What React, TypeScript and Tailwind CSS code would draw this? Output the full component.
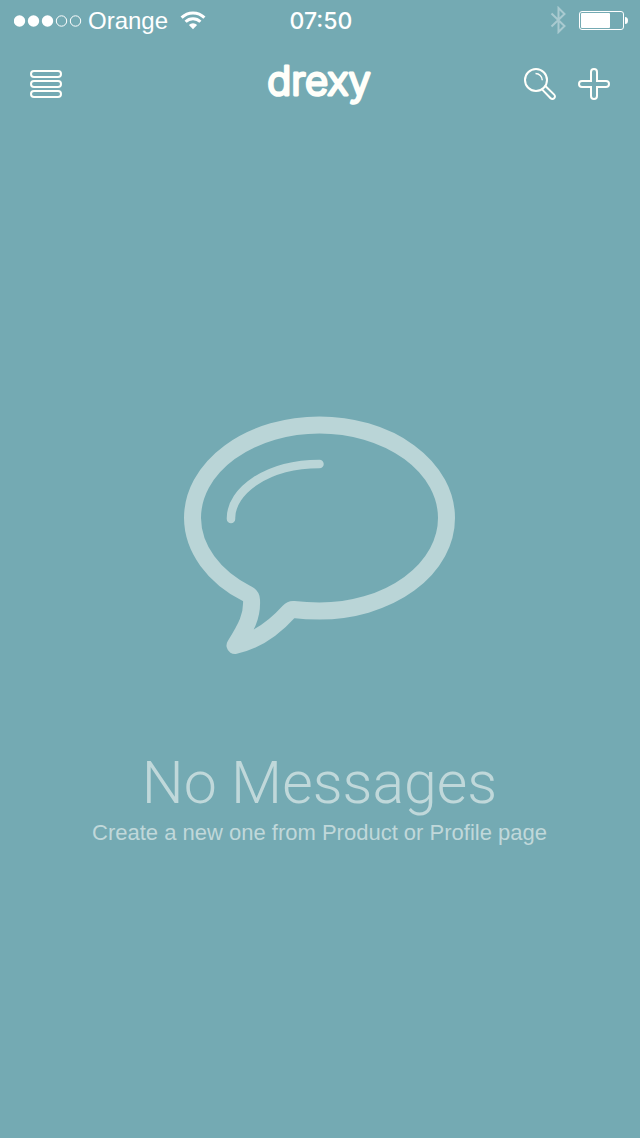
import React from "react";

function StatusBar() {
  return (
    <div className="grid h-10 grid-cols-[1fr_auto_1fr] items-center pr-3 pl-3.5 text-2xl text-white">
      <div className="flex items-center">
        <svg width="68" height="13" viewBox="0 0 68 13" role="img" aria-label="Signal: 3 of 5">
          <g fill="#fff">
            <circle cx="5.5" cy="7" r="5.7" />
            <circle cx="19.5" cy="7" r="5.7" />
            <circle cx="33.5" cy="7" r="5.7" />
          </g>
          <g fill="none" stroke="#fff">
            <circle cx="47.5" cy="7" r="5.2" />
            <circle cx="61.5" cy="7" r="5.2" />
          </g>
        </svg>
        <span className="ml-1.5 pt-0.5">Orange</span>
        <svg className="ml-3" width="26" height="19" viewBox="0 0 26 19" role="img" aria-label="Wi-Fi">
          <g fill="none" stroke="#fff" strokeWidth="3">
            <path d="M1.6 6.6A16.2 16.2 0 0 1 24.4 6.6" />
            <path d="M5.6 10.8A10.5 10.5 0 0 1 20.4 10.8" />
          </g>
          <path d="M8.9 14A5.8 5.8 0 0 1 17.1 14L13 18.3Z" fill="#fff" />
        </svg>
      </div>
      <time className="pt-0.5 font-['Inter'] text-[23px] font-medium">07:50</time>
      <div className="flex items-center justify-end gap-3">
        <svg width="17" height="28" viewBox="0 0 17 28" role="img" aria-label="Bluetooth">
          <path d="M1.5 7.5L14.5 20L8.5 26V2L14.5 8L1.5 20.5" fill="none" stroke="#a9cad0" strokeWidth="2" />
        </svg>
        <svg width="49" height="20" viewBox="0 0 49 20" role="img" aria-label="Battery">
          <rect x="0.5" y="1.5" width="44" height="18" rx="2.5" fill="none" stroke="#fff" />
          <rect x="2" y="3" width="29" height="15" rx="1" fill="#fff" />
          <path d="M46 7A3 3.5 0 0 1 46 14Z" fill="#fff" />
        </svg>
      </div>
    </div>
  );
}

function NavBar() {
  return (
    <header className="grid h-[88px] grid-cols-[1fr_auto_1fr] items-center px-[29px]">
      <button type="button" aria-label="Menu" className="justify-self-start">
        <svg width="34" height="30" viewBox="0 0 34 30" fill="none" stroke="#fffffa" strokeWidth="2">
          <rect x="2" y="2" width="30" height="6" rx="3" />
          <rect x="2" y="12" width="30" height="6" rx="3" />
          <rect x="2" y="22" width="30" height="6" rx="3" />
        </svg>
      </button>
      <h1>
        <svg width="112" height="60" viewBox="0 0 112 60">
          <text
            x="55"
            y="41"
            textAnchor="middle"
            fill="#fffffa"
            stroke="#fffffa"
            strokeWidth="2.8"
            strokeLinejoin="round"
            className="font-['Inter'] text-[40px] font-light"
          >
            drexy
          </text>
        </svg>
      </h1>
      <div className="flex items-center justify-self-end gap-5">
        <button type="button" aria-label="Search">
          <svg width="34" height="34" viewBox="0 0 34 34" fill="none" stroke="#fffffa" strokeWidth="2">
            <circle cx="13" cy="13" r="11" />
            <path d="M12.5 6.5A6.8 6.8 0 0 1 19.3 13.3" strokeWidth="1.4" />
            <path d="M18.8 22.1L27.6 31.2A2.3 2.3 0 0 0 31.2 27.6L22.1 18.8" />
          </svg>
        </button>
        <button type="button" aria-label="New message">
          <svg width="34" height="34" viewBox="0 0 34 34" fill="none" stroke="#fffffa" strokeWidth="2">
            <path d="M14 14V5A3 3 0 0 1 20 5V14H29A3 3 0 0 1 29 20H20V29A3 3 0 0 1 14 29V20H5A3 3 0 0 1 5 14Z" />
          </svg>
        </button>
      </div>
    </header>
  );
}

function EmptyMessages() {
  return (
    <main className="flex flex-1 flex-col items-center justify-center pt-0.5 pr-px text-center text-[#c0d8da]">
      <svg width="273" height="239" viewBox="183 415 273 239" fill="none" stroke="#bad5d7" strokeLinejoin="round" strokeLinecap="round" aria-hidden="true">
        <path
          strokeWidth="17"
          d="M247.5 593A127 93 0 0 1 192.5 517A127 93 0 0 1 319.5 424A127 93 0 0 1 446.5 517A127 93 0 0 1 319.5 610Q306 610 293.5 608.5Q291 608.3 289 610.5C275 626 256 640 235 644.5C246 627 252.5 615 251.5 599Q251.3 595 247.5 593Z"
        />
        <path strokeWidth="8.5" d="M231 518V517C231 490 267 463 319.5 463" />
      </svg>
      <h2 className="mt-[98px] font-['Roboto'] text-[59px] leading-[60px] font-light">No Messages</h2>
      <p className="text-[22px] leading-10">Create a new one from Product or Profile page</p>
    </main>
  );
}

export default function App() {
  return (
    <div className="flex min-h-screen flex-col bg-[#74aab3] font-['Liberation_Sans',Arial,sans-serif]">
      <StatusBar />
      <NavBar />
      <EmptyMessages />
    </div>
  );
}
